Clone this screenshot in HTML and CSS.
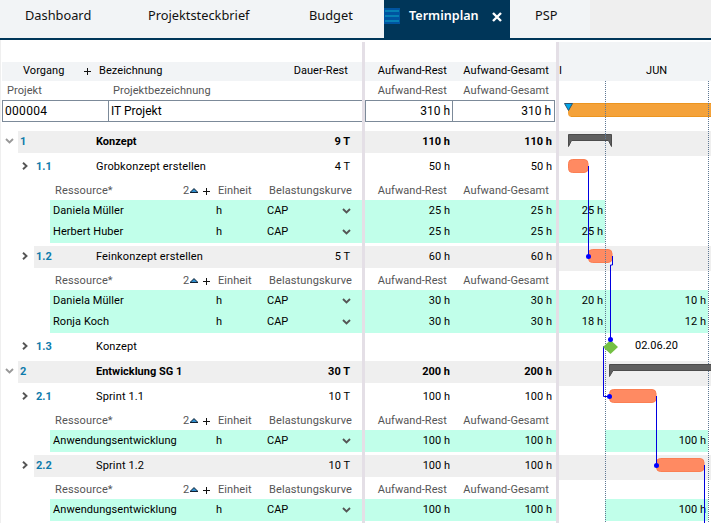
FILE: index.html
```html
<!DOCTYPE html>
<html lang="de">
<head>
  <meta charset="UTF-8">
  <meta name="viewport" content="width=device-width, initial-scale=1.0">
  <title>Terminplan - IT Projekt</title>
  <link rel="stylesheet" href="styles.css">
</head>
<body>
  <nav class="tabs">
    <a class="tab tab-dashboard">Dashboard</a>
    <a class="tab tab-steckbrief">Projektsteckbrief</a>
    <a class="tab tab-budget">Budget</a>
    <a class="tab active">
      <svg class="menu" width="16" height="16"><rect width="16" height="16" fill="#0054a0"/><path d="M1 3h14M1 8h14M1 13h14" stroke="#0680b4" stroke-width="2"/></svg>
      <span>Terminplan</span>
      <svg class="close" width="10" height="10"><path d="M1 1l8 8M9 1l-8 8" stroke="#fff" stroke-width="2.4"/></svg>
    </a>
    <a class="tab tab-psp">PSP</a>
  </nav>

  <main class="board" id="board">
    <div class="row spacer">
      <div class="left"></div><div class="mid"></div><div class="chart"></div>
    </div>
    <div class="row titles">
      <div class="left">
        <span class="t-vorgang">Vorgang</span>
        <svg class="plus" width="7" height="7"><path d="M0 3.5h7M3.5 0v7" stroke="#111"/></svg>
        <span class="t-bez">Bezeichnung</span>
        <span class="t-dauer">Dauer-Rest</span>
      </div>
      <div class="mid"><span>Aufwand-Rest</span><span>Aufwand-Gesamt</span></div>
      <div class="chart"><span class="month-prev">I</span><span class="month">JUN</span></div>
    </div>
    <div class="row subtitles">
      <div class="left"><span class="s-projekt">Projekt</span><span>Projektbezeichnung</span></div>
      <div class="mid"><span>Aufwand-Rest</span><span>Aufwand-Gesamt</span></div>
      <div class="chart"></div>
    </div>
    <div class="row project">
      <div class="left"><div class="box"><span class="p-id">000004</span><span class="p-name">IT Projekt</span></div></div>
      <div class="mid"><div class="box"><span>310 h</span><span>310 h</span></div></div>
      <div class="chart"></div>
    </div>
    <div id="rows"></div>

    <svg class="gantt" width="152" height="442" viewBox="559 81 152 442">
      <g stroke="#5f7894" stroke-dasharray="1 1">
        <path d="M605.5 81v442M708.5 81v442"/>
      </g>
      <path d="M568 103h144v14h-140q-4 0-4-4z" fill="#f4a23a"/>
      <path d="M568 103.5h144M571 116.5h141" stroke="#ec951f"/>
      <path d="M708.5 103v14" stroke="#5f7894" stroke-dasharray="1 1"/>
      <path d="M564.5 103.5h8l-4 7z" fill="#00a5e8" stroke="#2c5574"/>

      <g fill="#606060" stroke="#4c4c4c">
        <path d="M568.5 134.5h43v12l-3-6h-37l-3 6z"/>
        <path d="M609.5 364.5h110v6h-106.5l-3.5 6z"/>
      </g>
      <g fill="#ff8a62" stroke="#fb7f53">
        <rect x="568.5" y="159.5" width="19.5" height="13" rx="4"/>
        <rect x="588.5" y="249.5" width="23.5" height="13" rx="4"/>
        <rect x="609.5" y="389.5" width="46.5" height="13" rx="4"/>
        <rect x="656.5" y="458.5" width="47.5" height="13" rx="4"/>
      </g>
      <path d="M605.5 103v14M605.5 134v6M605.5 249v14" stroke="#5f7894" stroke-dasharray="1 1"/>

      <g fill="none" stroke="#0000e0">
        <path d="M588.5 166v90"/>
        <path d="M612.5 256v9h-2v75"/>
        <path d="M604 346.5h-.5v50h6"/>
        <path d="M656.5 396v69"/>
        <path d="M704.5 465v58"/>
      </g>
      <path d="M610.5 340l7.500 7-7.500 7-7.500-7z" fill="#74c043"/>
      <g fill="#0000ff">
        <circle cx="588.5" cy="256.5" r="2.5"/>
        <circle cx="610.5" cy="339.5" r="2.5"/>
        <circle cx="609.5" cy="396.5" r="2.5"/>
        <circle cx="656.5" cy="465.5" r="2.5"/>
      </g>
    </svg>
  </main>

  <script>
    const vorgaenge = [
      { nr: '1', name: 'Konzept', dauer: '9 T', aufwand: '110 h', summe: true, grau: true },
      { nr: '1.1', name: 'Grobkonzept erstellen', dauer: '4 T', aufwand: '50 h', ressourcen: [
        { name: 'Daniela Müller', aufwand: '25 h', mai: '25 h' },
        { name: 'Herbert Huber', aufwand: '25 h', mai: '25 h' }
      ] },
      { nr: '1.2', name: 'Feinkonzept erstellen', dauer: '5 T', aufwand: '60 h', grau: true, ressourcen: [
        { name: 'Daniela Müller', aufwand: '30 h', mai: '20 h', juni: '10 h' },
        { name: 'Ronja Koch', aufwand: '30 h', mai: '18 h', juni: '12 h' }
      ] },
      { nr: '1.3', name: 'Konzept', dauer: '', aufwand: '', datum: '02.06.20' },
      { nr: '2', name: 'Entwicklung SG 1', dauer: '30 T', aufwand: '200 h', summe: true, grau: true },
      { nr: '2.1', name: 'Sprint 1.1', dauer: '10 T', aufwand: '100 h', ressourcen: [
        { name: 'Anwendungsentwicklung', aufwand: '100 h', juni: '100 h' }
      ] },
      { nr: '2.2', name: 'Sprint 1.2', dauer: '10 T', aufwand: '100 h', grau: true, ressourcen: [
        { name: 'Anwendungsentwicklung', aufwand: '100 h', juni: '100 h' }
      ] }
    ];

    const pfeilUnten = '<svg width="9" height="6"><path d="M1 1l3.5 3.5L8 1" fill="none" stroke="currentColor" stroke-width="1.9"/></svg>';
    const pfeilRechts = '<svg width="6" height="8"><path d="M1 .8l3.5 3.2L1 7.2" fill="none" stroke="currentColor" stroke-width="1.9"/></svg>';

    function zeile(klasse, left, mid, chart) {
      return `<div class="row ${klasse}"><div class="left">${left}</div><div class="mid">${mid}</div><div class="chart">${chart}</div></div>`;
    }

    function vorgangZeile(v) {
      const klasse = 'task' + (v.summe ? ' sum' : '') + (v.grau ? ' shaded' : '');
      return zeile(klasse,
        `<span class="toggle">${v.summe ? pfeilUnten : pfeilRechts}</span>
         <div class="line"><span class="num">${v.nr}</span><span class="name">${v.name}</span><span class="dauer">${v.dauer}</span></div>`,
        `<div class="line"><span>${v.aufwand}</span><span>${v.aufwand}</span></div>`,
        v.datum ? `<span class="datum">${v.datum}</span>` : '');
    }

    function ressourcenKopf() {
      return zeile('reshead',
        `<span class="r-name">Ressource*</span><span class="r-sort">2</span>
         <svg class="sort" width="10" height="5"><path d="M1 4.5L5 .6l4 3.900z" fill="#2f8fd0" stroke="#123"/></svg>
         <svg class="plus" width="7" height="7"><path d="M0 3.5h7M3.5 0v7" stroke="#111"/></svg>
         <span class="r-einheit">Einheit</span><span class="r-kurve">Belastungskurve</span>`,
        '<span>Aufwand-Rest</span><span>Aufwand-Gesamt</span>', '');
    }

    function ressourceZeile(r) {
      return zeile('res',
        `<div class="line"><span class="r-name">${r.name}</span><span class="r-h">h</span><span class="r-cap">CAP</span>${pfeilUnten}</div>`,
        `<div class="line"><span>${r.aufwand}</span><span>${r.aufwand}</span></div>`,
        `<span class="mai ${r.mai ? 'on' : ''}">${r.mai || ''}</span><span class="juni ${r.juni ? 'on' : ''}">${r.juni || ''}</span>`);
    }

    document.getElementById('rows').innerHTML = vorgaenge.map(v => {
      let html = vorgangZeile(v);
      if (v.ressourcen) {
        html += ressourcenKopf() + '<div class="resgroup">' + v.ressourcen.map(ressourceZeile).join('') + '</div>';
      }
      return html;
    }).join('');
  </script>
</body>
</html>
```
FILE: styles.css
```css
* { box-sizing: border-box; }
body {
  margin: 0;
  height: 523px;
  overflow: hidden;
  background: #fff;
  color: #000;
  font-family: Roboto, "Liberation Sans", sans-serif;
  font-size: 11px;
}
svg { display: block; flex: none; }
span { white-space: nowrap; }

/* Tabs */
.tabs {
  display: flex;
  height: 40px;
  background: #efefef;
  border-bottom: 2px solid #003659;
  font-family: "Noto Sans", "Open Sans", sans-serif;
  font-size: 12.8px;
}
.tab {
  height: 38px;
  line-height: 31px;
  background: #f2f4f6;
  color: #111;
}
.tab-dashboard { width: 123px; padding-left: 25px; }
.tab-steckbrief { width: 161px; padding-left: 25px; }
.tab-budget { width: 100px; padding-left: 25px; }
.tab-psp { width: 80px; padding-left: 25px; }
.tab.active {
  display: flex;
  width: 126px;
  background: #003659;
  color: #fff;
  font-weight: 600;
  font-size: 12.6px;
}
.tab .menu { margin: 8px 9px 0 0; }
.tab.active span { width: 83px; }
.tab .close { margin-top: 12px; }

/* Plan */
.board {
  position: relative;
  height: 483px;
  padding-top: 2px;
  padding-left: 1px;
  border-left: 1px solid #efefef;
  overflow: hidden;
}
.row { display: flex; }
.left {
  display: flex;
  width: 363px;
  border-right: 3px solid #e4dfe6;
}
.mid {
  display: flex;
  width: 194px;
  border-right: 3px solid #e4dfe6;
}
.chart { display: flex; flex: 1; }

.spacer { height: 20px; }
.spacer .chart { background: #f2f4f6; }

.titles { height: 19px; line-height: 17px; background: #f2f4f6; }
.titles .left { padding-left: 21px; }
.t-vorgang { width: 61px; }
.titles .plus { margin: 6px 8px 0 0; }
.t-bez { flex: 1; }
.t-dauer { padding-right: 14px; }
.titles, .subtitles, .reshead { letter-spacing: .06px; }
.titles .mid span, .subtitles .mid span, .reshead .mid span { text-align: right; }
.titles .mid span:first-child, .subtitles .mid span:first-child, .reshead .mid span:first-child { width: 82px; }
.titles .mid span:last-child, .subtitles .mid span:last-child, .reshead .mid span:last-child { width: 102px; }
.month-prev { width: 87px; }

.subtitles, .reshead { height: 19px; line-height: 19px; color: #555; }
.s-projekt { width: 111px; padding-left: 5px; }

.project { height: 31px; font-size: 12px; }
.project .box {
  display: flex;
  height: 22px;
  line-height: 20px;
  border: 1px solid #7c8a99;
}
.project .left .box { width: 100%; border-right: 0; }
.project .mid .box { width: 190px; }
.p-id { width: 106px; padding-left: 2px; border-right: 1px solid #7c8a99; letter-spacing: .3px; }
.p-name { padding-left: 2px; }
.project .mid span { text-align: right; padding-right: 2px; }
.project .mid span:first-child { width: 87px; border-right: 1px solid #7c8a99; }
.project .mid span:last-child { width: 100px; }

/* Tasks */
.task { height: 25px; }
.line { display: flex; flex: 1; height: 22px; line-height: 22px; }
.toggle { width: 32px; padding: 6px 0 0 20px; color: #555; }
.sum .toggle { width: 16px; padding: 7px 0 0 3px; color: #999; }
.num { width: 62px; padding-left: 2px; color: #0e7bab; font-weight: bold; }
.sum .num { width: 78px; }
.name { flex: 1; letter-spacing: .14px; }
.sum .line { font-weight: bold; }
.sum .name { letter-spacing: 0; }
.dauer { padding-right: 12px; }
.shaded .line, .shaded .chart { background: #efefef; }
.line > span { flex-shrink: 0; }
.mid .line span { text-align: right; }
.mid .line span:first-child { width: 85px; }
.mid .line span:last-child { width: 102px; }
.datum { padding-left: 76px; line-height: 19px; }

/* Resources */
.reshead .left { padding-left: 53px; }
.reshead .r-name { width: 128px; letter-spacing: .15px; }
.reshead .r-sort { width: 6px; }
.reshead .sort { margin-top: 7px; }
.reshead .plus { margin: 7px 8px 0 4px; }
.r-einheit { width: 51px; }
.r-kurve { letter-spacing: .12px; }
.resgroup { padding-bottom: 3px; background: linear-gradient(to right, transparent 360px, #e4dfe6 360px, #e4dfe6 363px, transparent 363px, transparent 554px, #e4dfe6 554px, #e4dfe6 557px, transparent 557px); }
.res { height: 21px; line-height: 22px; }
.res:last-child { height: 22px; }
.res .line { height: auto; background: #c1ffea; }
.res .left { padding-left: 48px; }
.res .r-name { width: 166px; padding-left: 3px; letter-spacing: .07px; }
.r-h { width: 51px; }
.r-cap { width: 75px; }
.res svg { margin-top: 8px; color: #555; }
.mai, .juni { text-align: right; }
.mai { width: 46px; padding-right: 2px; }
.juni { width: 103px; padding-right: 2px; }
.mai.on, .juni.on { background: #c1ffea; }

.gantt {
  position: absolute;
  left: 558px;
  top: 41px;
}
```
